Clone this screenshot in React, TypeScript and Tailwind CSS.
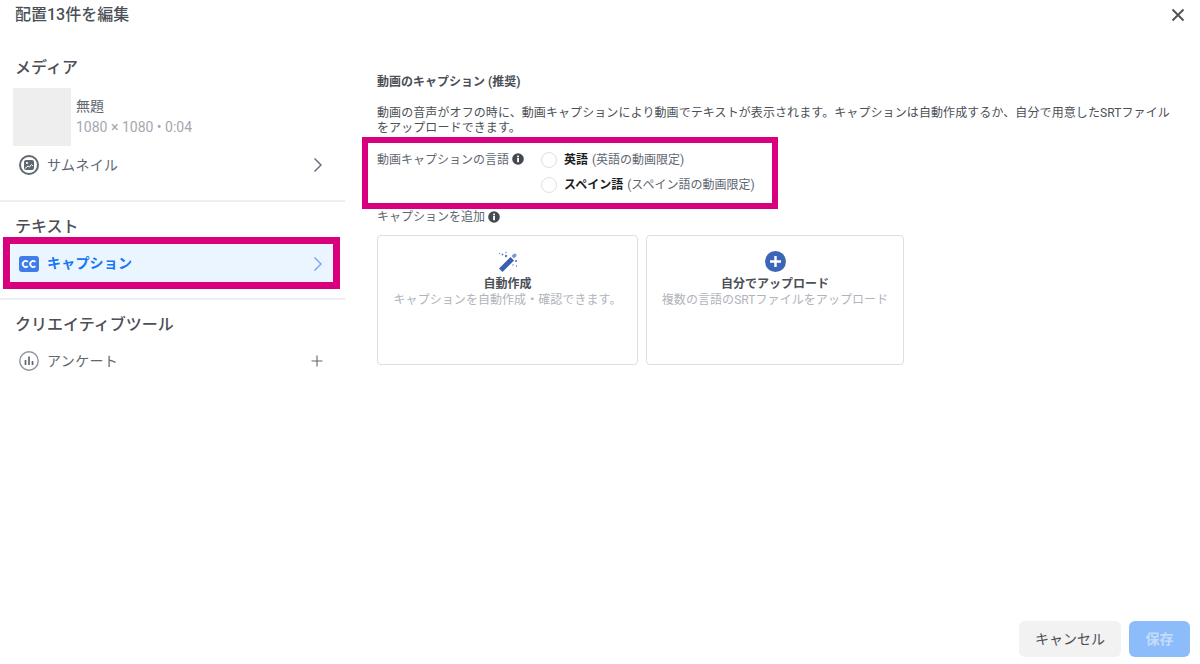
import React from "react";

const Info = () => (
  <svg width="12" height="12" viewBox="0 0 12 12" className="shrink-0">
    <circle cx="6" cy="6" r="5.8" fill="#444950" />
    <rect x="5.100" y="5" width="1.900" height="4.200" fill="#fff" />
    <rect x="5.100" y="2.600" width="1.900" height="1.700" fill="#fff" />
  </svg>
);

const Chevron = ({ color }: { color: string }) => (
  <svg width="10" height="16" viewBox="0 0 10 16" fill="none">
    <path d="M1.500 1.500 8 8l-6.500 6.500" stroke={color} strokeWidth="1.400" />
  </svg>
);

const Card = ({ w, icon, title, sub }: { w: string; icon: React.ReactNode; title: string; sub: string }) => (
  <div className={`${w} h-[130px] rounded border border-[#dddfe2] flex flex-col items-center pt-[15px]`}>
    <div className="h-[21px] flex items-center justify-center">{icon}</div>
    <div className="mt-[4px] text-[12px] leading-[17px] font-bold text-[#4b4f56]">{title}</div>
    <div className="-mt-[1px] text-[12px] leading-[16px] tracking-[0.06px] text-[#b0b4ba]">{sub}</div>
  </div>
);

export default function App() {
  return (
    <div className="w-[1200px] h-[664px] bg-white flex flex-col overflow-hidden font-['Roboto','Noto_Sans_CJK_JP',sans-serif] text-[#444950]">
      <header className="h-[30px] flex items-center justify-between pl-[15px] pr-[15px] shrink-0">
        <h1 className="text-[16px] font-medium text-[#4b4f56]">配置13件を編集</h1>
        <svg width="14" height="14" viewBox="0 0 14 14" fill="none">
          <path d="M1.500 1.500l11 11M12.500 1.500l-11 11" stroke="#4b4f56" strokeWidth="1.800" />
        </svg>
      </header>

      <main className="flex flex-1 min-h-0">
        <aside className="w-[345px] shrink-0">
          <section className="h-[172px] border-b-2 border-[#eceef1]">
            <h2 className="pl-[15px] pt-[27px] text-[16px] leading-[22px] font-medium text-[#4b4f56]">メディア</h2>
            <div className="mt-[9px] ml-[13px] flex">
              <div className="w-[58px] h-[58px] bg-[#eeeeee]" />
              <div className="ml-[5px] pt-[8px]">
                <div className="text-[14px] leading-[20px] text-[#606770]">無題</div>
                <div className="mt-[1px] text-[14px] leading-[20px] text-[#a4a8ae]">1080 × 1080 • 0:04</div>
              </div>
            </div>
            <div className="mt-[8px] pl-[19px] pr-[22px] h-[22px] flex items-center">
              <svg width="20" height="20" viewBox="0 0 20 20" fill="none">
                <circle cx="10" cy="10" r="9" stroke="#606770" strokeWidth="2" />
                <rect x="5" y="5" width="10" height="10" rx="2" fill="#606770" />
                <circle cx="8" cy="8" r="1.100" fill="#fff" />
                <path d="M6 13.500l3-2.500 1.500 1 2-2.500 1.500 1.500" stroke="#fff" strokeWidth="1" />
              </svg>
              <span className="ml-[8px] flex-1 text-[14px] tracking-[0.35px] text-[#606770]">サムネイル</span>
              <Chevron color="#606770" />
            </div>
          </section>

          <section className="h-[98px] border-b-2 border-[#eceef1]">
            <h2 className="pl-[15px] pt-[14px] text-[16px] leading-[22px] font-medium text-[#4b4f56]">テキスト</h2>
            <div className="relative mt-[6px] ml-[11px] mr-[12px] h-[39px] rounded bg-[#ebf5ff] pl-[8px] pr-[10px] flex items-center">
              <div className="absolute -left-[8px] -right-[7px] -top-[7px] -bottom-[6px] border-[7px] border-[#d9007e]" />
              <svg width="20" height="16" viewBox="0 0 20 16">
                <rect width="20" height="16" rx="3" fill="#3f7ee8" />
                <path d="M8.800 5.800a3 3 0 1 0 0 4.400M16.300 5.800a3 3 0 1 0 0 4.400" stroke="#fff" strokeWidth="1.700" fill="none" />
              </svg>
              <span className="ml-[8px] flex-1 text-[14px] tracking-[0.2px] font-bold text-[#1877f2]">キャプション</span>
              <Chevron color="#6aa5f5" />
            </div>
          </section>

          <section>
            <h2 className="pl-[15px] pt-[14px] text-[16px] leading-[22px] font-medium text-[#4b4f56]">クリエイティブツール</h2>
            <div className="mt-[14px] pl-[19px] pr-[22px] h-[22px] flex items-center">
              <svg width="20" height="20" viewBox="0 0 20 20" fill="none">
                <circle cx="10" cy="10" r="9.200" stroke="#8d949e" strokeWidth="1.400" />
                <path d="M6.500 9v5M10 5.500v8.500M13.500 10v4" stroke="#606770" strokeWidth="1.700" />
              </svg>
              <span className="ml-[8px] flex-1 text-[14px] tracking-[0.35px] text-[#606770]">アンケート</span>
              <svg width="12" height="12" viewBox="0 0 12 12" fill="none">
                <path d="M6 0.500v11M0.500 6h11" stroke="#606770" strokeWidth="1.100" />
              </svg>
            </div>
          </section>
        </aside>

        <div className="flex-1 pl-[32px] pr-[28px] pt-[43px]">
          <h3 className="text-[12px] leading-[18px] font-bold text-[#4b4f56]">動画のキャプション (推奨)</h3>
          <p className="mt-[15px] text-[12px] leading-[15px] tracking-[0.09px] text-[#4b4f56]">
            動画の音声がオフの時に、動画キャプションにより動画でテキストが表示されます。キャプションは自動作成するか、自分で用意したSRTファイルをアップロードできます。
          </p>

          <div className="relative mt-[14px] w-[404px] h-[54px] flex text-[12px]">
            <div className="absolute -left-[15px] right-[3px] -top-[13px] -bottom-[5px] border-[6px] border-[#d9007e]" />
            <div className="w-[164px] pt-[1px] flex items-start gap-[3px] text-[#606770] leading-[18px]">
              <span>動画キャプションの言語</span>
              <span className="mt-[2px]"><Info /></span>
            </div>
            <div className="flex flex-col gap-[7px] pt-[1px]">
              {[
                ["英語", "(英語の動画限定)"],
                ["スペイン語", "(スペイン語の動画限定)"],
              ].map(([a, b]) => (
                <div key={a} className="h-[18px] flex items-center">
                  <span className="w-[16px] h-[16px] rounded-full border border-[#dddfe2] bg-white" />
                  <span className="ml-[7px] font-bold text-[#1c1e21]">{a}</span>
                  <span className="ml-[4px] text-[#606770]">{b}</span>
                </div>
              ))}
            </div>
          </div>

          <div className="mt-[4px] h-[18px] flex items-center gap-[3px] text-[12px] text-[#606770]">
            <span>キャプションを追加</span>
            <Info />
          </div>

          <div className="mt-[9px] flex gap-[8px]">
            <Card
              w="w-[261px]"
              title="自動作成"
              sub="キャプションを自動作成・確認できます。"
              icon={
                <svg width="20" height="21" viewBox="0 0 20 21">
                  <path d="M1 17.500 12.500 6l3.500 3.500L4.500 21z" fill="#3b5fb0" />
                  <path d="M13.500 5l2-2q1.500-1 2.500 0t0 2.500l-2 2z" fill="#7f97d0" />
                  <g fill="#5d7cc4">
                    <circle cx="4.500" cy="3.500" r="0.900" /><circle cx="8" cy="1.500" r="0.700" /><circle cx="1.500" cy="2.500" r="0.600" />
                    <circle cx="8" cy="5" r="1.200" /><circle cx="18" cy="10" r="1.100" /><circle cx="18.500" cy="15" r="0.700" /><circle cx="15" cy="14" r="0.700" />
                  </g>
                </svg>
              }
            />
            <Card
              w="w-[258px]"
              title="自分でアップロード"
              sub="複数の言語のSRTファイルをアップロード"
              icon={
                <svg width="21" height="21" viewBox="0 0 21 21">
                  <circle cx="10.500" cy="10.500" r="10.500" fill="#3b66b8" />
                  <path d="M10.500 5v11M5 10.500h11" stroke="#fff" strokeWidth="2.400" />
                </svg>
              }
            />
          </div>
        </div>
      </main>

      <footer className="shrink-0 flex justify-end gap-[8px] pr-[10px] pb-[7px]">
        <button className="w-[102px] h-[36px] rounded-md bg-[#f2f2f2] text-[14px] text-[#4b4f56]">キャンセル</button>
        <button className="w-[61px] h-[36px] rounded-md bg-[#8cbcf9] text-[14px] font-bold text-[#c3dcfb]">保存</button>
      </footer>
    </div>
  );
}
